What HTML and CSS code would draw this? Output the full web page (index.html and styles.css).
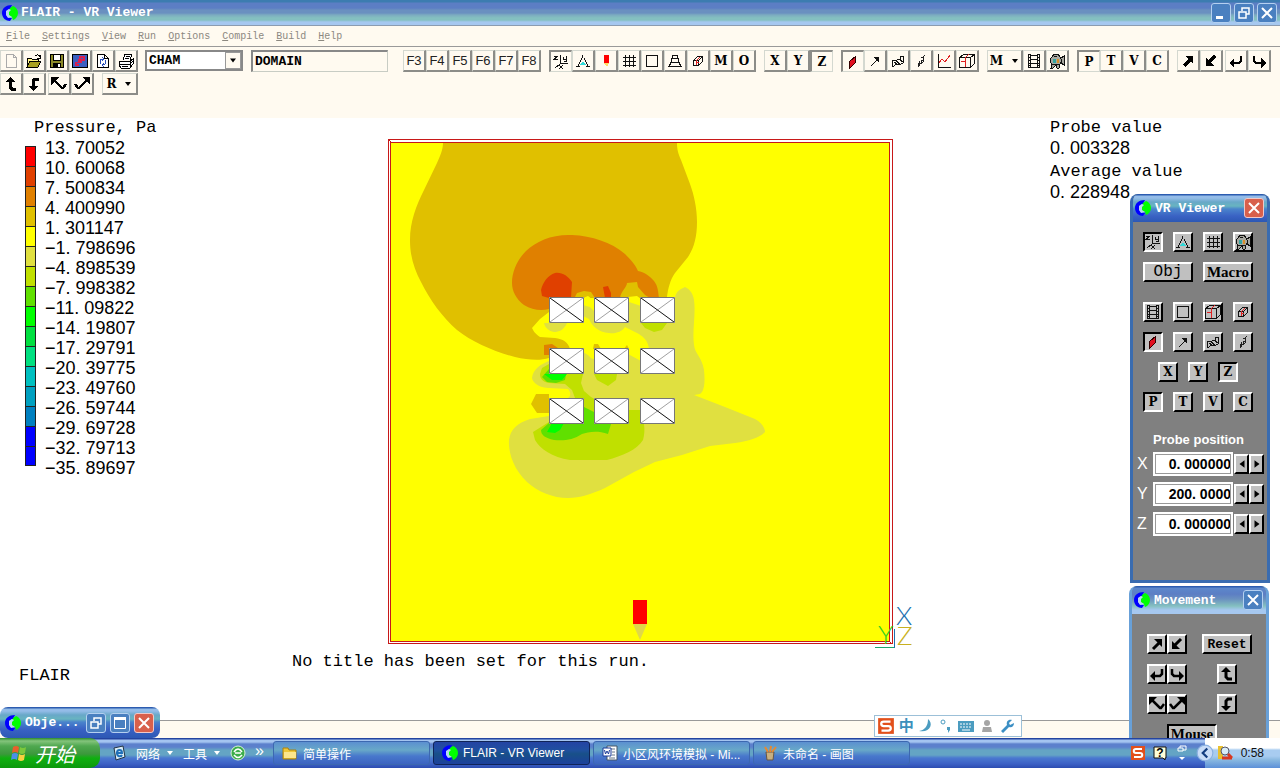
FILE: index.html
```html
<!DOCTYPE html>
<html lang="zh-Hans">
<head>
  <meta charset="UTF-8" />
  <meta name="viewport" content="width=device-width, initial-scale=1.0"/>
  <title>FLAIR - VR Viewer</title>
  <link rel="stylesheet" href="styles.css">
</head>
<body>
  <!-- icon sprite -->
  <svg class="sprite" aria-hidden="true">
    <symbol id="logo" viewBox="0 0 16 16">
      <path d="M10 0C4 0 0 3 0 8s4 8 8 8l2-3C6 13 4 11 4 8s2-4 4-4z" fill="#00f"/>
      <path d="M8 3l3-2c3 1 5 4 5 7s-2 6-5 7l-1-3-4-2V7z" fill="#0f0"/>
      <path d="M9 5L7 7v3l3 2-4 1-2-3V6l3-2z" fill="#b8d8f0"/>
    </symbol>
    <symbol id="new" viewBox="0 0 16 16"><path d="M3.500 1.500h7l3 3v10h-10zM10.500 1.500v3h3" fill="none" stroke="#aaa"/></symbol>
    <symbol id="open" viewBox="0 0 16 16">
      <path d="M1 14V5h4l1 1h6v2" fill="#fff68a" stroke="#000"/><path d="M1 14l3-6h11l-3 6z" fill="#a8a020" stroke="#000"/>
      <path d="M9 3c2-2 4-1 5 1M14 2v3h-3" fill="none" stroke="#000"/>
    </symbol>
    <symbol id="save" viewBox="0 0 16 16">
      <path d="M1.500 1.500h13v13h-13z" fill="#8c8a28" stroke="#000"/><path d="M4.500 1.500h7v6h-7z" fill="#fff" stroke="#000"/><path d="M4 10h8v5H4z"/><path d="M9 11h2v3H9z" fill="#fff"/>
    </symbol>
    <symbol id="solve" viewBox="0 0 16 16">
      <path d="M.5 1.500h15v13H.5z" fill="#3c5fc0" stroke="#000"/><path d="M7 3h6v5h-3v2H7v3H3V9h3V6h1z" fill="#d82050"/><path d="M9 5h2v1H9zM5 10h2v1H5z" fill="#3c5fc0"/>
    </symbol>
    <symbol id="refresh" viewBox="0 0 16 16">
      <path d="M2.500 1.500h7l4 4v9h-11zM9.500 1.500v4h4" fill="#fff" stroke="#000"/><path d="M6 11c-2-2-1-5 2-5M7 4l2 2-2 2M10 7c2 2 0 5-2 5M9 10l-2 2 2 2" fill="none" stroke="#2a4fb8"/>
    </symbol>
    <symbol id="print" viewBox="0 0 16 16">
      <path d="M5 7l2-6h7l-2 6M8 3h4M7 5h4" fill="#fff" stroke="#000"/><path d="M1 8h11l3-2v5l-3 4H3l-2-3z" fill="#fff" stroke="#000"/><path d="M1 11h11l3-3M4 13h6M12 8v6" fill="none" stroke="#000"/>
    </symbol>
    <symbol id="axes" viewBox="0 0 16 16">
      <path d="M1 2.500h3L1 5.500h4M7.500 1v8.500H15M7 10l-5 4M10.500 3v2.500h3M13.500 2v5.500H11M6 11l4 4M10 11l-4 4" fill="none" stroke="#111"/>
    </symbol>
    <symbol id="compass" viewBox="0 0 16 16">
      <path d="M7.500 2v3M7 5L3 13M9 5l4 8M1 13.500h4M11 13.500h4" fill="none" stroke="#111"/><path d="M5 12l3-4 3 4z" fill="#30d8d8"/>
    </symbol>
    <symbol id="marker" viewBox="0 0 16 16"><path d="M6 2h5v8H6z" fill="#f00"/><path d="M6 10h5l-2 4z" fill="#fd6"/></symbol>
    <symbol id="grid" viewBox="0 0 16 16"><path d="M4.500 2v12M8.500 2v12M12.500 2v12M2 4.500h13M2 8.500h13M2 12.500h13" stroke="#111"/></symbol>
    <symbol id="square" viewBox="0 0 16 16"><path d="M2.500 2.500h11v11h-11z" fill="none" stroke="#111"/></symbol>
    <symbol id="stack" viewBox="0 0 16 16"><path d="M5.500 2.500h5v3h-5zM4.500 5.500h7v4h-7zM4 9.500h8l2 4H2z" fill="none" stroke="#111"/></symbol>
    <symbol id="cube" viewBox="0 0 16 16">
      <path d="M3.500 7.500l4-4h5v5l-4 4h-5zM3 7.500h5.500V13M8.500 7.500l4-4" fill="none" stroke="#111"/><path d="M6.500 12V7.500l3-3M6 9.500h3" fill="none" stroke="#e02020"/>
    </symbol>
    <symbol id="bigcube" viewBox="0 0 16 16">
      <path d="M.5 4.500l4-3h11v9l-4 4H.5zM.5 4.500h11v10M11.500 4.500l4-3" fill="none" stroke="#111"/><path d="M6.500 14V4.500l3-3M2 8.500h5" fill="none" stroke="#e02020"/>
    </symbol>
    <symbol id="slice" viewBox="0 0 16 16"><path d="M4.500 7.500l6-5v6l-6 6z" fill="#e01020" stroke="#300"/></symbol>
    <symbol id="vector" viewBox="0 0 16 16"><path d="M4 13l7-7" stroke="#111"/><path d="M6 4h6v6z" fill="#111"/></symbol>
    <symbol id="iso" viewBox="0 0 16 16">
      <path d="M2 7h5l3-1 1-3 3 1-1 6-4 2-3-1-3 3-1-3zM6 8l4 3M9 6l4 3M4 9l3 2" fill="none" stroke="#111"/>
    </symbol>
    <symbol id="stream" viewBox="0 0 16 16"><path d="M12 2l-2 2v3L8 8v2l-3 4M8 4l2 1M6 8l1 2-2 1v3M11 5l-1 4-3 2" fill="none" stroke="#222"/></symbol>
    <symbol id="graph" viewBox="0 0 16 16"><path d="M2.500 1v13.500H15" fill="none" stroke="#111"/><path d="M3 10l3-4 3 3 3-4 2-3" fill="none" stroke="#e02020"/></symbol>
    <symbol id="film" viewBox="0 0 16 16">
      <path d="M2.500 1.500h2v13h-2zM11.500 1.500h2v13h-2z" fill="none" stroke="#111"/><path d="M5 2.500h6M5 6.500h6M5 10.500h6M5 14.500h6M2 4.500h3M2 7.500h3M2 10.500h3M2 12.500h3M11 4.500h3M11 7.500h3M11 10.500h3M11 12.500h3" stroke="#111"/>
    </symbol>
    <symbol id="camera" viewBox="0 0 16 16">
      <path d="M3 4l2-3h4l2 3v2l4-3v9l-4-3v2l-1 4H8l-1-3-3 3H2l1-4-2-2V6z" fill="#a8a8a0" stroke="#111"/><path d="M4 6h3v4H4z" fill="#36a5a0"/><path d="M8 6h2v4H8z" fill="#d8902a"/><path d="M5 3.500h3M3 11.500h7M12.500 6v4" stroke="#111"/>
    </symbol>
    <symbol id="ne" viewBox="0 0 16 16"><path d="M4 13l6-6" stroke="#000" stroke-width="3"/><path d="M5 3h8v8z"/></symbol>
    <symbol id="sw" viewBox="0 0 16 16"><path d="M12 3L6 9" stroke="#000" stroke-width="3"/><path d="M11 13H3V5z"/></symbol>
    <symbol id="back" viewBox="0 0 16 16"><path d="M13 3v5l-2 2H5" fill="none" stroke="#000" stroke-width="2.500"/><path d="M1 10l5-5v10z"/></symbol>
    <symbol id="forward" viewBox="0 0 16 16"><path d="M3 3v5l2 2h6" fill="none" stroke="#000" stroke-width="2.500"/><path d="M15 10l-5-5v10z"/></symbol>
    <symbol id="up" viewBox="0 0 16 16"><path d="M7 5v6l2 2h4" fill="none" stroke="#000" stroke-width="3"/><path d="M7 1l5 5H2z"/></symbol>
    <symbol id="down" viewBox="0 0 16 16"><path d="M13 3H9L7 5v6" fill="none" stroke="#000" stroke-width="3"/><path d="M7 15l5-5H2z"/></symbol>
    <symbol id="rollleft" viewBox="0 0 16 16"><path d="M3 4l8 8h1l3-4" fill="none" stroke="#000" stroke-width="2.500"/><path d="M0 1h8L0 9z"/></symbol>
    <symbol id="rollright" viewBox="0 0 16 16"><path d="M13 4l-8 8H4L1 8" fill="none" stroke="#000" stroke-width="2.500"/><path d="M16 1H8l8 8z"/></symbol>
    <symbol id="drop" viewBox="0 0 8 8"><path d="M1 2h6L4 6z"/></symbol>
    <symbol id="min" viewBox="0 0 16 16"><path d="M3 11h7v3H3z" fill="#fff"/></symbol>
    <symbol id="restore" viewBox="0 0 16 16"><path d="M3 7h7v6H3zM6 6V3h7v6h-3" fill="none" stroke="#fff" stroke-width="1.500"/></symbol>
    <symbol id="max" viewBox="0 0 16 16"><path d="M2.500 2.500h11v11h-11z" fill="none" stroke="#fff"/><path d="M2 2h12v3H2z" fill="#fff"/></symbol>
    <symbol id="close" viewBox="0 0 16 16"><path d="M3 3l10 10M13 3L3 13" stroke="#fff" stroke-width="2"/></symbol>
    <symbol id="sogou" viewBox="0 0 16 16">
      <path d="M1 1h14v14H1z" fill="#e2501c"/><path d="M12 4H6C3 4 3 8 6 8h4c3 0 3 4 0 4H4" fill="none" stroke="#fff" stroke-width="2"/>
    </symbol>
    <symbol id="building" viewBox="0 0 35 26">
      <path d="M0 0h35v26H0z" fill="#fff"/><path d="M1 25L34 1" stroke="#777" stroke-width=".7"/><path d="M1 1l33 24" stroke="#111"/><path d="M.5.5h34v25H.5z" fill="none" stroke="#777"/>
    </symbol>
  </svg>

  <div class="desktop">
    <main class="app">
      <header class="titlebar">
        <svg class="icon"><use href="#logo"/></svg>
        <h1>FLAIR - VR Viewer</h1>
        <button class="caption-btn" aria-label="Minimize"><svg class="icon"><use href="#min"/></svg></button>
        <button class="caption-btn" aria-label="Restore"><svg class="icon"><use href="#restore"/></svg></button>
        <button class="caption-btn" aria-label="Close"><svg class="icon"><use href="#close"/></svg></button>
      </header>

      <nav class="menu">
        <button><u>F</u>ile</button>
        <button><u>S</u>ettings</button>
        <button><u>V</u>iew</button>
        <button><u>R</u>un</button>
        <button><u>O</u>ptions</button>
        <button><u>C</u>ompile</button>
        <button><u>B</u>uild</button>
        <button><u>H</u>elp</button>
      </nav>

      <div class="toolbar">
        <div class="tool-row">
          <div class="tools">
            <button aria-label="New"><svg class="icon"><use href="#new"/></svg></button>
            <button aria-label="Open"><svg class="icon"><use href="#open"/></svg></button>
            <button aria-label="Save"><svg class="icon"><use href="#save"/></svg></button>
            <button aria-label="Solve"><svg class="icon"><use href="#solve"/></svg></button>
            <button aria-label="Refresh"><svg class="icon"><use href="#refresh"/></svg></button>
            <button aria-label="Print"><svg class="icon"><use href="#print"/></svg></button>
          </div>
          <div class="combo">
            <select aria-label="Group"><option>CHAM</option></select>
            <svg class="combo-arrow"><use href="#drop"/></svg>
          </div>
          <input class="object-name" type="text" value="DOMAIN" aria-label="Object name">
          <div class="tools fkeys">
            <button>F3</button><button>F4</button><button>F5</button><button>F6</button><button>F7</button><button>F8</button>
          </div>
          <div class="tools">
            <button class="on" aria-label="Axes"><svg class="icon"><use href="#axes"/></svg></button>
            <button aria-label="Compass"><svg class="icon"><use href="#compass"/></svg></button>
            <button aria-label="Probe"><svg class="icon"><use href="#marker"/></svg></button>
            <button aria-label="Mesh"><svg class="icon"><use href="#grid"/></svg></button>
            <button aria-label="Frame"><svg class="icon"><use href="#square"/></svg></button>
            <button aria-label="Perspective"><svg class="icon"><use href="#stack"/></svg></button>
            <button aria-label="Wireframe"><svg class="icon"><use href="#cube"/></svg></button>
            <button>M</button>
            <button>O</button>
          </div>
          <div class="tools">
            <button>X</button><button>Y</button><button class="on">Z</button>
          </div>
          <div class="tools">
            <button class="on" aria-label="Contour"><svg class="icon"><use href="#slice"/></svg></button>
            <button aria-label="Vector"><svg class="icon"><use href="#vector"/></svg></button>
            <button aria-label="Iso-surface"><svg class="icon"><use href="#iso"/></svg></button>
            <button aria-label="Streamline"><svg class="icon"><use href="#stream"/></svg></button>
            <button aria-label="Graph"><svg class="icon"><use href="#graph"/></svg></button>
            <button aria-label="Slice"><svg class="icon"><use href="#bigcube"/></svg></button>
          </div>
          <div class="tools">
            <button class="split">M <svg class="drop"><use href="#drop"/></svg></button>
            <button aria-label="Animate"><svg class="icon"><use href="#film"/></svg></button>
            <button aria-label="Record"><svg class="icon"><use href="#camera"/></svg></button>
          </div>
          <div class="tools">
            <button class="on">P</button><button>T</button><button>V</button><button>C</button>
          </div>
          <div class="tools">
            <button aria-label="Move in"><svg class="icon"><use href="#ne"/></svg></button>
            <button aria-label="Move out"><svg class="icon"><use href="#sw"/></svg></button>
          </div>
          <div class="tools joined">
            <button aria-label="Turn left"><svg class="icon"><use href="#back"/></svg></button>
            <button aria-label="Turn right"><svg class="icon"><use href="#forward"/></svg></button>
          </div>
        </div>
        <div class="tool-row">
          <div class="tools">
            <button aria-label="Tilt up"><svg class="icon"><use href="#up"/></svg></button>
            <button aria-label="Tilt down"><svg class="icon"><use href="#down"/></svg></button>
          </div>
          <div class="tools joined">
            <button aria-label="Roll left"><svg class="icon"><use href="#rollleft"/></svg></button>
            <button aria-label="Roll right"><svg class="icon"><use href="#rollright"/></svg></button>
          </div>
          <div class="tools">
            <button class="split">R <svg class="drop"><use href="#drop"/></svg></button>
          </div>
        </div>
      </div>

      <section class="view">
        <div class="view-main">
          <div class="legend">
            <h2>Pressure, Pa</h2>
            <div class="legend-scale">
              <div class="legend-bar">
                <i class="c1"></i><i class="c2"></i><i class="c3"></i><i class="c4"></i>
                <i class="c5"></i><i class="c6"></i><i class="c7"></i><i class="c8"></i>
                <i class="c9"></i><i class="c10"></i><i class="c11"></i><i class="c12"></i>
                <i class="c13"></i><i class="c14"></i><i class="c15"></i><i class="c15"></i>
              </div>
              <ol class="legend-values">
                <li>13. 70052</li>
                <li>10. 60068</li>
                <li>7. 500834</li>
                <li>4. 400990</li>
                <li>1. 301147</li>
                <li>−1. 798696</li>
                <li>−4. 898539</li>
                <li>−7. 998382</li>
                <li>−11. 09822</li>
                <li>−14. 19807</li>
                <li>−17. 29791</li>
                <li>−20. 39775</li>
                <li>−23. 49760</li>
                <li>−26. 59744</li>
                <li>−29. 69728</li>
                <li>−32. 79713</li>
                <li>−35. 89697</li>
              </ol>
            </div>
          </div>

          <!-- pressure contours on the Z plane -->
          <svg class="plot" viewBox="388 139 505 506" role="img" aria-label="Pressure contour">
            <rect x="391" y="143" width="499" height="498" fill="#ff0"/>
            <path fill="#e0c000" d="M443 143C443 150 440 156 437 163L424 190C416 206 410 222 410 240C410 256 414 269 421 282C430 300 442 317 457 330C472 342 495 352 515 357C528 360 540 361 549 358L570 349C568 342 563 339 555 338L540 337C535 334 533 330 532 328L540 319L549 312L583 312V297H667C668 289 670 280 675 273L688 257C694 248 697 237 697 222C697 208 694 195 690 184L681 160C678 153 677 149 677 143Z"/>
            <path fill="#e08000" d="M549 309C541 311 532 310 524 305C516 299 512 291 512 283C512 272 517 260 526 251C536 241 553 234 572 235C592 236 611 242 625 254C631 260 635 264 638 271C644 272 650 276 654 281C658 286 658 291 659 298H549ZM544 345L552 344L561 350V355H544Z"/>
            <path fill="#e04000" d="M541 290C543 282 548 275 555 273C562 272 568 276 572 282L571 298H549L542 296ZM603 287L608 286L611 293V298H605Z"/>
            <path fill="#e0c000" d="M575 297L577 293L584 291L591 292L595 298ZM620 298C621 291 627 287 627 283L637 282L638 287L645 295L650 298Z"/>
            <path fill="#ff0" d="M583 298L588 296L596 302L628 302V297L637 296L645 302V320H583Z"/>
            <path fill="#e0e040" d="M583 305L590 307L596 313H629V302L641 306H675V297C677 290 681 289 685 287C690 289 693 294 694 300C696 315 692 330 694 345C695 354 702 357 704 370C705 380 705 391 700 394L694 395L725 407L755 419C762 423 765 428 765 432C760 437 750 441 735 443L710 446L682 455L655 462L634 472L605 488C592 494 580 498 568 498C553 498 538 492 527 482C514 470 508 453 509 440C510 430 517 423 530 419L549 416V398H568C571 396 571 392 568 389L549 388C541 388 533 384 532 378C533 369 541 364 549 361L583 353L588 357L596 360V349H629V349L642 359L649 349C648 340 643 337 639 334L625 327C622 332 615 334 609 333C598 332 592 326 589 319L583 316ZM544 323H567C564 330 559 332 554 332C549 331 545 328 544 323ZM583 352L588 355L594 361V374H583Z"/>
            <path fill="#ff0" d="M628 349L634 346L641 354V361L628 354Z"/>
            <path fill="#c0e000" d="M540 374L542 368L549 364L565 374H583L581 383L584 391L591 397L600 402L610 410L640 410C644 420 646 430 643 440C637 450 622 456 607 460H570C552 457 540 449 535 440L533 432L549 422L575 398L572 390L565 384L549 383C543 382 540 379 540 374ZM594 374H617L616 380L608 386L597 380ZM641 323H667L662 330L654 332L645 328Z"/>
            <path fill="#e0c000" d="M531 404L536 394H549V413H537ZM593 349L594 344L598 344L601 349ZM624 349L627 345L629 349Z"/>
            <path fill="#60e000" d="M542 377L549 369H567L565 380L556 383L547 382ZM584 407L600 415L611 424L608 434C597 430 588 432 582 434C573 440 564 441 554 440C545 438 541 435 541 430L549 423H583Z"/>
            <path fill="#0f0" d="M544 374H567L562 380L552 380ZM547 432L552 423H564L560 430L555 433Z"/>
            <g>
              <use href="#building" x="549" y="297" width="35" height="26"/>
              <use href="#building" x="594" y="297" width="35" height="26"/>
              <use href="#building" x="640" y="297" width="35" height="26"/>
              <use href="#building" x="549" y="348" width="35" height="26"/>
              <use href="#building" x="594" y="348" width="35" height="26"/>
              <use href="#building" x="640" y="348" width="35" height="26"/>
              <use href="#building" x="549" y="398" width="35" height="26"/>
              <use href="#building" x="594" y="398" width="35" height="26"/>
              <use href="#building" x="640" y="398" width="35" height="26"/>
            </g>
            <path fill="none" stroke="#c81818" shape-rendering="crispEdges" d="M388.500 139.500h504v504h-504zM390.500 142.500h499v499h-499zM388 139l3 3M892 644l-3-3"/>
            <path fill="#f00" d="M633 600h14v24h-14z"/>
            <path fill="#e0d848" d="M633 624h14l-7 16z"/>
            <path fill="none" stroke="#1aa86a" d="M875 647.500h19"/>
            <path fill="none" stroke="#2070b0" d="M894.500 629v19"/>
            <g class="axis-labels">
              <text x="896" y="625" fill="#2070b0">X</text>
              <text x="878" y="644" fill="#30d020">Y</text>
              <text x="897" y="645" fill="#c8b020">Z</text>
            </g>
          </svg>

          <dl class="probe-values">
            <dt>Probe value</dt>
            <dd>0. 003328</dd>
            <dt>Average value</dt>
            <dd>0. 228948</dd>
          </dl>
        </div>
        <div class="view-foot">
          <span class="product">FLAIR</span>
          <span class="run-title">No title has been set for this run.</span>
        </div>
      </section>
      <footer class="status"></footer>

      <aside class="panel viewer-panel">
        <header>
          <svg class="icon"><use href="#logo"/></svg>
          <h2>VR Viewer</h2>
          <button class="caption-btn close" aria-label="Close"><svg class="icon"><use href="#close"/></svg></button>
        </header>
        <div class="panel-body">
          <div class="keys">
            <button class="on" aria-label="Axes"><svg class="icon"><use href="#axes"/></svg></button>
            <button aria-label="Compass"><svg class="icon"><use href="#compass"/></svg></button>
            <button aria-label="Mesh"><svg class="icon"><use href="#grid"/></svg></button>
            <button aria-label="Record"><svg class="icon"><use href="#camera"/></svg></button>
          </div>
          <div class="keys">
            <button class="wide mono">Obj</button>
            <button class="wide">Macro</button>
          </div>
          <div class="keys spaced">
            <button aria-label="Animate"><svg class="icon"><use href="#film"/></svg></button>
            <button aria-label="Frame"><svg class="icon"><use href="#square"/></svg></button>
            <button aria-label="Slice"><svg class="icon"><use href="#bigcube"/></svg></button>
            <button aria-label="Wireframe"><svg class="icon"><use href="#cube"/></svg></button>
          </div>
          <div class="keys">
            <button class="on" aria-label="Contour"><svg class="icon"><use href="#slice"/></svg></button>
            <button aria-label="Vector"><svg class="icon"><use href="#vector"/></svg></button>
            <button aria-label="Iso-surface"><svg class="icon"><use href="#iso"/></svg></button>
            <button aria-label="Streamline"><svg class="icon"><use href="#stream"/></svg></button>
          </div>
          <div class="keys centered">
            <button>X</button><button>Y</button><button class="on">Z</button>
          </div>
          <div class="keys">
            <button class="on">P</button><button>T</button><button>V</button><button>C</button>
          </div>
          <fieldset class="probe">
            <legend>Probe position</legend>
            <div class="probe-row">
              <label for="px">X</label>
              <input id="px" type="text" value="0. 000000">
              <button aria-label="X down"><svg class="spin"><use href="#drop"/></svg></button>
              <button class="inc" aria-label="X up"><svg class="spin"><use href="#drop"/></svg></button>
            </div>
            <div class="probe-row">
              <label for="py">Y</label>
              <input id="py" type="text" value="200. 0000">
              <button aria-label="Y down"><svg class="spin"><use href="#drop"/></svg></button>
              <button class="inc" aria-label="Y up"><svg class="spin"><use href="#drop"/></svg></button>
            </div>
            <div class="probe-row">
              <label for="pz">Z</label>
              <input id="pz" type="text" value="0. 000000">
              <button aria-label="Z down"><svg class="spin"><use href="#drop"/></svg></button>
              <button class="inc" aria-label="Z up"><svg class="spin"><use href="#drop"/></svg></button>
            </div>
          </fieldset>
        </div>
      </aside>

      <aside class="panel inactive movement-panel">
        <header>
          <svg class="icon"><use href="#logo"/></svg>
          <h2>Movement</h2>
          <button class="caption-btn" aria-label="Close"><svg class="icon"><use href="#close"/></svg></button>
        </header>
        <div class="panel-body">
          <div class="move-grid">
            <div class="pair">
              <button aria-label="Move in"><svg class="icon"><use href="#ne"/></svg></button>
              <button aria-label="Move out"><svg class="icon"><use href="#sw"/></svg></button>
            </div>
            <button class="wide reset">Reset</button>
            <div class="pair">
              <button aria-label="Turn left"><svg class="icon"><use href="#back"/></svg></button>
              <button aria-label="Turn right"><svg class="icon"><use href="#forward"/></svg></button>
            </div>
            <button aria-label="Tilt up"><svg class="icon"><use href="#up"/></svg></button>
            <div class="pair">
              <button aria-label="Roll left"><svg class="icon"><use href="#rollleft"/></svg></button>
              <button aria-label="Roll right"><svg class="icon"><use href="#rollright"/></svg></button>
            </div>
            <button aria-label="Tilt down"><svg class="icon"><use href="#down"/></svg></button>
            <button class="wide mouse on">Mouse</button>
          </div>
        </div>
      </aside>

      <aside class="panel objects-panel">
        <header>
          <svg class="icon"><use href="#logo"/></svg>
          <h2>Obje...</h2>
          <button class="caption-btn" aria-label="Restore"><svg class="icon"><use href="#restore"/></svg></button>
          <button class="caption-btn" aria-label="Maximize"><svg class="icon"><use href="#max"/></svg></button>
          <button class="caption-btn close" aria-label="Close"><svg class="icon"><use href="#close"/></svg></button>
        </header>
      </aside>

      <div class="ime">
        <svg class="ime-logo"><use href="#sogou"/></svg>
        <span>中</span>
        <svg viewBox="0 0 16 16"><path d="M10 1c6 5 2 14-9 12C7 12 10 8 10 1z" fill="#4b9cc0"/></svg>
        <svg viewBox="0 0 16 16"><circle cx="5" cy="4" r="2" fill="none" stroke="#4b9cc0"/><path d="M9 9h3v3l-2 3v-3H9z" fill="#4b9cc0"/></svg>
        <svg class="ime-keys" viewBox="0 0 18 16"><path d="M1 3h16v11H1z" fill="#4b9cc0"/><path d="M3 6h12M3 9h12" stroke="#fff" stroke-dasharray="2 1"/><path d="M5 12h8" stroke="#fff"/></svg>
        <svg viewBox="0 0 16 16"><circle cx="8" cy="5" r="3" fill="#a5a5a5"/><path d="M4 9h8l1 5H3z" fill="#a5a5a5"/></svg>
        <svg viewBox="0 0 16 16"><path d="M2 13l6-6c-1-3 1-6 5-5l-3 3 1 2 4-2c0 3-2 5-5 4l-6 6z" fill="#3c8fc4"/></svg>
      </div>
    </main>

    <footer class="taskbar">
      <button class="start">
        <svg viewBox="0 0 18 18"><path d="M3 3q3-2 6 0l-1 6q-3-2-6 0z" fill="#e8602c"/><path d="M10 3q3 2 6 0l-1 6q-3 2-6 0z" fill="#7cc83c"/><path d="M2 10q3-2 6 0l-1 6q-3-2-6 0z" fill="#4a90e8"/><path d="M9 10q3 2 6 0l-1 6q-3 2-6 0z" fill="#f8d040"/></svg>
        开始
      </button>
      <div class="quick">
        <svg class="quick-icon" viewBox="0 0 16 16"><path d="M3 3l9-2 2 11-9 3z" fill="#d8ecf8" stroke="#234"/><path d="M5 8h6c0-4-5-4-5 0s4 4 5 2" fill="none" stroke="#1f70b8" stroke-width="2"/></svg>
        <button>网络 <svg class="drop"><use href="#drop"/></svg></button>
        <button>工具 <svg class="drop"><use href="#drop"/></svg></button>
        <svg class="quick-icon" viewBox="0 0 16 16"><circle cx="8" cy="8" r="7" fill="#3cae4a" stroke="#d8f0d8"/><path d="M4 7q4-6 8 0M4 10q4 5 8 0M5 8h6" fill="none" stroke="#fff" stroke-width="1.500"/></svg>
        <span class="more">»</span>
      </div>
      <div class="tasks">
        <button>
          <svg class="icon" viewBox="0 0 16 16"><path d="M1 3h5l1 2h7v9H1z" fill="#f0c838" stroke="#a88010"/><path d="M2 7h12v6H2z" fill="#fce68c"/></svg>
          简单操作
        </button>
        <button class="active"><svg class="icon"><use href="#logo"/></svg>FLAIR - VR Viewer</button>
        <button>
          <svg class="icon" viewBox="0 0 16 16"><path d="M5 1h10v14H5z" fill="#fff" stroke="#456"/><path d="M9 4h4M10 7h3M10 10h3M7 13h6" stroke="#678"/><path d="M1 3h8v8H1z" fill="#fff" stroke="#1a3a98"/><path d="M2.500 5l1 4 1.500-3 1.500 3 1-4" fill="none" stroke="#1a3a98"/></svg>
          小区风环境模拟 - Mi...
        </button>
        <button>
          <svg class="icon" viewBox="0 0 16 16"><path d="M4 7h8l-1 8H5z" fill="#c8b080" stroke="#654"/><path d="M6 7L3 2M8 7l1-6M10 7l4-5" stroke="#e88830" stroke-width="2"/></svg>
          未命名 - 画图
        </button>
      </div>
      <div class="lang">
        <svg class="icon"><use href="#sogou"/></svg>
        <svg class="icon help" viewBox="0 0 16 16"><path d="M2 2h12v11h-1v2l-2-2H2z" fill="#ffffd8" stroke="#111"/><text x="8" y="12" text-anchor="middle">?</text></svg>
        <svg class="icon" viewBox="0 0 16 16"><path d="M4 3h5v3H4zM6 3V1h6v4H9" fill="none" stroke="#fff"/><path d="M5 12h6l-3 3z" fill="#fff"/></svg>
      </div>
      <div class="tray">
        <button aria-label="Show hidden icons"><svg viewBox="0 0 16 16"><circle cx="8" cy="8" r="7" fill="#c8dcf8" stroke="#8ab0e0"/><path d="M10 4L6 8l4 4" fill="none" stroke="#123c80" stroke-width="2"/></svg></button>
        <svg class="icon" viewBox="0 0 16 16"><path d="M1 1h5v13H1z" fill="#e8c030"/><circle cx="8" cy="6" r="4" fill="#d8ecf8" stroke="#556"/><path d="M5 13h10M11 9l4 4" stroke="#d83820" stroke-width="3"/></svg>
        <time>0:58</time>
      </div>
    </footer>
  </div>
</body>
</html>
```
FILE: styles.css
```css
* {
  box-sizing: border-box;
}
body {
  margin: 0;
  font-family: "Liberation Sans", "Noto Sans CJK SC", sans-serif;
  font-size: 12px;
  color: #000;
}
h1, h2, dl, dd, ol, fieldset {
  margin: 0;
  padding: 0;
}
button, input, select {
  margin: 0;
  padding: 0;
  border: 0;
  border-radius: 0;
  font: inherit;
  color: inherit;
  background: none;
}
.sprite {
  position: absolute;
  width: 0;
  height: 0;
}
.icon {
  display: block;
  flex: none;
  width: 16px;
  height: 16px;
}
.tools .icon, .keys .icon {
  shape-rendering: crispEdges;
}
.drop {
  width: 8px;
  height: 8px;
}
.desktop {
  display: flex;
  flex-direction: column;
  height: 100vh;
  min-height: 768px;
}
.app {
  position: relative;
  display: flex;
  flex-direction: column;
  flex: 1;
  overflow: hidden;
  background: #fffaf0;
}

/* title bars */
.titlebar {
  display: flex;
  align-items: center;
  gap: 2px;
  height: 26px;
  padding: 0 3px 0 2px;
  border-bottom: 1px solid #8c9cb0;
  background: linear-gradient(#3c7cb0 0 2px, #5c7ec4 3px 8px, #6a90c0 10px 13px, #7cacc0 15px, #84c0c0 18px 20px, #a6c8f0 22px);
}
.titlebar h1, .panel h2 {
  flex: 1;
  font: bold 13px "Liberation Mono", monospace;
  color: #fff;
  white-space: nowrap;
}
.titlebar h1 {
  padding-left: 1px;
}
.caption-btn {
  display: flex;
  align-items: center;
  justify-content: center;
  flex: none;
  width: 20px;
  height: 20px;
  border: 1px solid #b4d0f0;
  border-radius: 3px;
  background: #4a80c0;
}
.titlebar .caption-btn {
  margin-left: 1px;
}
.caption-btn.close {
  background: #d8604c;
  border-color: #f0c8c8;
}

/* menu */
.menu {
  display: flex;
  align-items: center;
  gap: 12px;
  height: 21px;
  padding-left: 6px;
  border-bottom: 1px solid #999;
  font: 10px "Liberation Mono", monospace;
  color: #8c8880;
}

/* toolbar */
.toolbar {
  display: flex;
  flex-direction: column;
  gap: 1px;
  height: 71px;
  padding-top: 3px;
}
.tool-row {
  display: flex;
  gap: 8px;
}
.tools {
  display: flex;
}
.tools.joined {
  margin-left: -6px;
}
.tools button {
  display: flex;
  align-items: center;
  justify-content: center;
  width: 23px;
  height: 22px;
  border: 1px solid #d4d8d0;
  border-right: 2px solid #8c8c88;
  border-bottom: 2px solid #8c8c88;
  font: bold 12px "DejaVu Serif", serif;
}
.tools button.on {
  border: 1px solid #d4d8d0;
  border-left: 2px solid #8c8c88;
  border-top: 2px solid #8c8c88;
}
.tools button.split {
  width: 36px;
  gap: 8px;
}
.tools.fkeys button {
  font: 13px "Liberation Sans", sans-serif;
  color: #222;
}
.fkeys {
  margin-left: 7px;
}
.combo {
  position: relative;
  width: 98px;
  height: 21px;
  margin-left: -1px;
  border: 2px solid #888;
  background: #fff;
}
.combo select, .object-name {
  width: 100%;
  height: 100%;
  padding-left: 2px;
  appearance: none;
  font: bold 13px "Liberation Mono", monospace;
}
.combo-arrow {
  position: absolute;
  top: 0;
  right: 0;
  width: 16px;
  height: 17px;
  padding: 3px;
  border: 1px solid #999;
  background: #fffaf0;
  pointer-events: none;
}
.tool-row .object-name {
  width: 137px;
  height: 22px;
  border: 1px solid #c8ccc4;
  border-top: 2px solid #888;
  border-left: 2px solid #888;
}

/* 3D view */
.view {
  flex: 1;
  background: #fff;
  border-bottom: 1px solid #999;
}
.status {
  height: 17px;
}
.view-main {
  display: grid;
  grid-template-columns: 1fr 505px 1fr;
  padding-top: 21px;
}
.plot {
  display: block;
  width: 100%;
  overflow: visible;
}
.axis-labels {
  font: 300 26px Lato, sans-serif;
}
.legend, .probe-values {
  margin-top: -21px;
}
.legend h2, .probe-values, .view-foot {
  font: 17px/20px "Liberation Mono", monospace;
}
.legend h2 {
  padding-left: 34px;
}
.legend-scale {
  display: flex;
  gap: 9px;
  padding-left: 25px;
}
.legend-bar {
  width: 11px;
  margin-top: 8px;
}
.legend-bar i {
  display: block;
  height: 20px;
  border: 1px solid #222;
  border-bottom: 0;
}
.legend-bar i:last-child {
  border-bottom: 1px solid #222;
}
.legend-values {
  list-style: none;
}
.legend-values, .probe-values dd {
  font: 18px/20px "Liberation Sans", sans-serif;
}
.c1 { background: #f00; }
.c2 { background: #e04000; }
.c3 { background: #e08000; }
.c4 { background: #e0c000; }
.c5 { background: #ff0; }
.c6 { background: #e0e040; }
.c7 { background: #c0e000; }
.c8 { background: #60e000; }
.c9 { background: #0f0; }
.c10 { background: #00e040; }
.c11 { background: #00e080; }
.c12 { background: #00c0c0; }
.c13 { background: #00a0c0; }
.c14 { background: #0080c0; }
.c15 { background: #00f; }
.probe-values {
  justify-self: end;
  width: 230px;
}
.probe-values dd {
  margin-bottom: 4px;
}
.view-foot {
  display: flex;
  align-items: flex-start;
  padding: 7px 0 0 19px;
}
.product {
  width: 273px;
  padding-top: 14px;
}

/* floating panels */
.panel {
  position: absolute;
  width: 140px;
  border: 3px solid #3a6cb0;
  border-top: 0;
  border-radius: 8px 8px 0 0;
  background: #808080;
  overflow: hidden;
}
.panel header {
  display: flex;
  align-items: center;
  gap: 4px;
  height: 28px;
  margin: 0 -3px;
  padding: 0 6px 0 5px;
  background: linear-gradient(#2c5cb0 0 1px, #94bce8 2px 4px, #68a8c8 8px, #68b4c0 12px, #4a84cc 15px, #3a62c4 22px, #2c58b4);
}
.panel.inactive header {
  background: linear-gradient(#2c5cb0 0 1px, #5c88cc 2px, #5c7ec4 8px, #6a90c0 13px, #84c0c0 20px, #a6c8f0 24px);
}
.panel.inactive {
  border-color: #68a0d8;
}
.panel-body button {
  display: flex;
  align-items: center;
  justify-content: center;
  width: 20px;
  height: 20px;
  border: 2px solid #fff;
  border-right-color: #000;
  border-bottom-color: #000;
  background: #c0c0c0;
  font: bold 12px "DejaVu Serif", serif;
}
.panel-body button.on {
  border-color: #000 #fff #fff #000;
}
.panel-body button.wide {
  width: 50px;
  font: bold 15px "Liberation Serif", serif;
}
.panel-body button.mono {
  font: 16px "Liberation Mono", monospace;
}
.panel-body button.reset {
  font: bold 13px "Liberation Mono", monospace;
}
.viewer-panel {
  top: 194px;
  right: 10px;
  border-bottom: 3px solid #3a6cb0;
}
.viewer-panel .panel-body {
  display: flex;
  flex-direction: column;
  gap: 10px;
  padding: 10px 0 44px;
}
.keys {
  display: flex;
  gap: 10px;
  padding-left: 10px;
}
.keys.spaced {
  margin-top: 10px;
}
.keys.centered {
  padding-left: 25px;
}
.probe {
  display: flex;
  flex-direction: column;
  gap: 6px;
  margin-top: 10px;
  border: 0;
  color: #fff;
}
.probe legend {
  padding: 0 0 4px 20px;
  font: bold 13px/16px "Liberation Sans", sans-serif;
}
.probe-row {
  display: flex;
  align-items: center;
  height: 24px;
  padding-left: 4px;
}
.probe-row label {
  width: 16px;
  font-size: 16px;
}
.probe-row input {
  width: 80px;
  height: 24px;
  margin-right: 1px;
  border: 2px solid #fff;
  outline: 1px solid #999;
  outline-offset: -3px;
  background: #fff;
  color: #000;
  font: bold 14px "Liberation Sans", sans-serif;
  text-align: right;
}
.panel-body .probe-row button {
  width: 15px;
}
.spin {
  width: 10px;
  height: 10px;
  flex: none;
  transform: rotate(90deg);
}
.inc .spin {
  transform: rotate(-90deg);
}
.movement-panel {
  top: 586px;
  right: 11px;
}
.move-grid {
  display: grid;
  grid-template-columns: 40px 50px;
  gap: 10px 15px;
  justify-items: center;
  padding: 20px 15px;
}
.pair {
  display: flex;
}
.mouse {
  grid-column: 1 / 3;
  justify-self: start;
  margin-left: 20px;
}
.objects-panel {
  bottom: 0;
  left: 0;
  width: 160px;
  border-radius: 8px;
  border: 0;
}
.objects-panel header {
  height: 31px;
  margin: 0;
}

/* input method bar */
.ime {
  position: absolute;
  right: 258px;
  bottom: 1px;
  display: flex;
  align-items: center;
  justify-content: space-between;
  width: 148px;
  height: 22px;
  padding: 0 6px 0 2px;
  border: 1px solid #9cc0d8;
  background: #fff;
  color: #3c90bc;
  font-size: 15px;
  line-height: 20px;
  font-weight: bold;
}
.ime svg {
  width: 16px;
  height: 16px;
}
.ime .ime-keys {
  width: 18px;
}
.ime .ime-logo {
  width: 18px;
  height: 18px;
}

/* taskbar */
.taskbar {
  display: flex;
  align-items: center;
  height: 30px;
  color: #fff;
  background: linear-gradient(#2444a0 0 1px, #a4c4f0 2px 4px, #5c80cc 6px 9px, #64a4c4 12px 17px, #4a78d0 20px, #3c60c4 26px, #2c4cb0);
}
.taskbar button {
  display: flex;
  align-items: center;
}
.start {
  align-self: stretch;
  width: 100px;
  padding-left: 10px;
  gap: 7px;
  border-radius: 0 10px 10px 0;
  background: linear-gradient(#2c8c2c, #84c47c 3px, #50a850 8px, #3c983c 16px, #10b010 20px, #0c980c);
  font-size: 20px;
  font-style: italic;
}
.start svg {
  width: 18px;
  height: 18px;
}
.quick {
  display: flex;
  align-items: center;
  flex: none;
  width: 173px;
  padding-left: 11px;
  gap: 9px;
}
.quick button {
  gap: 6px;
  white-space: nowrap;
}
.quick .drop {
  fill: #fff;
}
.quick-icon {
  flex: none;
  width: 16px;
  height: 16px;
}
.more {
  align-self: flex-start;
  font-size: 16px;
  line-height: 12px;
}
.tasks {
  display: flex;
  flex: 1;
  gap: 3px;
}
.tasks button {
  flex: 0 1 157px;
  gap: 5px;
  height: 24px;
  padding-left: 8px;
  border: 1px solid #3c68b0;
  border-radius: 3px;
  background: linear-gradient(#5c90d0, #68a8c8 8px, #4878cc 14px, #3c64c0);
  white-space: nowrap;
  overflow: hidden;
}
.tasks button.active {
  border-color: #102458;
  background: linear-gradient(#2444a4, #2050a0 8px, #185088 12px, #1c409c);
}
.lang {
  display: flex;
  gap: 6px;
  padding-right: 15px;
}
.help text {
  font: bold 12px "Liberation Sans", sans-serif;
}
.tray {
  display: flex;
  align-items: center;
  align-self: stretch;
  gap: 3px;
  padding-right: 16px;
  background: linear-gradient(#fff 0 10px, #a8ccf0 12px 18px, #88b8e0 22px, #5c90d8);
  color: #111;
}
.tray button {
  margin-left: -9px;
}
.tray button svg {
  width: 18px;
  height: 18px;
}
.tray time {
  margin-left: 5px;
}
```
